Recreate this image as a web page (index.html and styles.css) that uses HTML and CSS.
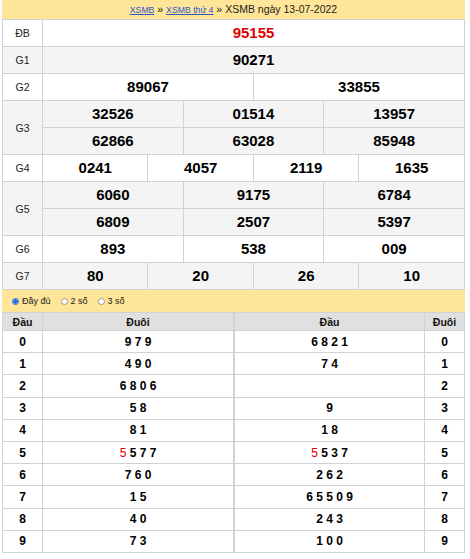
FILE: index.html
```html
<!DOCTYPE html>
<html lang="vi">
<head>
<meta charset="utf-8">
<link rel="stylesheet" href="styles.css">
</head>
<body>
<div class="wrap">
  <div class="bar">
    <a href="#">XSMB</a> » <a href="#">XSMB thứ 4</a> » XSMB ngày 13-07-2022
  </div>
  <table class="kq">
    <colgroup><col class="c-lbl"><col span="12"></colgroup>
    <tr><td class="l">ĐB</td><td colspan="12" class="red">95155</td></tr>
    <tr class="alt"><td class="l">G1</td><td colspan="12">90271</td></tr>
    <tr><td class="l">G2</td><td colspan="6">89067</td><td colspan="6">33855</td></tr>
    <tr class="alt"><td class="l" rowspan="2">G3</td><td colspan="4">32526</td><td colspan="4">01514</td><td colspan="4">13957</td></tr>
    <tr class="alt"><td colspan="4">62866</td><td colspan="4">63028</td><td colspan="4">85948</td></tr>
    <tr><td class="l">G4</td><td colspan="3">0241</td><td colspan="3">4057</td><td colspan="3">2119</td><td colspan="3">1635</td></tr>
    <tr class="alt"><td class="l" rowspan="2">G5</td><td colspan="4">6060</td><td colspan="4">9175</td><td colspan="4">6784</td></tr>
    <tr class="alt"><td colspan="4">6809</td><td colspan="4">2507</td><td colspan="4">5397</td></tr>
    <tr><td class="l">G6</td><td colspan="4">893</td><td colspan="4">538</td><td colspan="4">009</td></tr>
    <tr class="alt"><td class="l">G7</td><td colspan="3">80</td><td colspan="3">20</td><td colspan="3">26</td><td colspan="3">10</td></tr>
  </table>
  <div class="opt">
    <label class="radio"><span class="dot on"></span>Đầy đủ</label>
    <label class="radio"><span class="dot"></span>2 số</label>
    <label class="radio"><span class="dot"></span>3 số</label>
  </div>
  <div class="loto">
    <table class="lt left">
      <colgroup><col class="c-head"><col></colgroup>
      <tr class="hd"><th>Đầu</th><th>Đuôi</th></tr>
      <tr><td>0</td><td>9 7 9</td></tr>
      <tr><td>1</td><td>4 9 0</td></tr>
      <tr><td>2</td><td>6 8 0 6</td></tr>
      <tr><td>3</td><td>5 8</td></tr>
      <tr><td>4</td><td>8 1</td></tr>
      <tr><td>5</td><td><span class="r">5</span> 5 7 7</td></tr>
      <tr><td>6</td><td>7 6 0</td></tr>
      <tr><td>7</td><td>1 5</td></tr>
      <tr><td>8</td><td>4 0</td></tr>
      <tr><td>9</td><td>7 3</td></tr>
    </table>
    <table class="lt right">
      <colgroup><col><col class="c-tail"></colgroup>
      <tr class="hd"><th>Đầu</th><th>Đuôi</th></tr>
      <tr><td>6 8 2 1</td><td>0</td></tr>
      <tr><td>7 4</td><td>1</td></tr>
      <tr><td></td><td>2</td></tr>
      <tr><td>9</td><td>3</td></tr>
      <tr><td>1 8</td><td>4</td></tr>
      <tr><td><span class="r">5</span> 5 3 7</td><td>5</td></tr>
      <tr><td>2 6 2</td><td>6</td></tr>
      <tr><td>6 5 5 0 9</td><td>7</td></tr>
      <tr><td>2 4 3</td><td>8</td></tr>
      <tr><td>1 0 0</td><td>9</td></tr>
    </table>
  </div>
</div>
</body>
</html>
```
FILE: styles.css
```css
html, body {
  margin: 0;
  padding: 0;
  background: #fff;
}
body {
  font-family: "Liberation Sans", Arial, sans-serif;
  color: #000;
}
.wrap {
  margin-left: 2px;
  width: 463px;
}
.bar {
  height: 19px;
  background: #ffe597;
  font-size: 10.5px;
  line-height: 19px;
  text-align: center;
  color: #222;
}
.bar a {
  color: #2b55c9;
  font-size: 8.7px;
  text-decoration: underline;
}
.kq {
  width: 463px;
  border-collapse: collapse;
  table-layout: fixed;
}
.kq .c-lbl {
  width: 40px;
}
.kq td {
  border: 1px solid #d2d2d2;
  height: 26px;
  padding: 0;
  text-align: center;
  font-size: 15px;
  font-weight: bold;
  line-height: 16px;
}
.kq td.l {
  font-size: 10.5px;
  font-weight: normal;
  color: #222;
}
.kq td.red {
  color: #e00000;
}
.kq tr.alt td {
  background: #f4f4f4;
}
.opt {
  height: 22px;
  background: #ffe597;
  display: flex;
  align-items: center;
  padding-left: 10px;
  gap: 10px;
  font-size: 9px;
  color: #222;
}
.radio {
  display: flex;
  align-items: center;
  gap: 3px;
}
.dot {
  width: 7px;
  height: 7px;
  border-radius: 50%;
  border: 1px solid #9a9a9a;
  background: #fff;
  box-sizing: border-box;
}
.dot.on {
  border: 1px solid #1f6fe0;
  background: radial-gradient(circle, #1f6fe0 0 2px, #fff 2.5px);
}
.loto {
  display: flex;
}
.lt {
  border-collapse: collapse;
  table-layout: fixed;
}
.lt.left {
  width: 232px;
}
.lt.right {
  width: 231px;
}
.lt .c-head {
  width: 40px;
}
.lt .c-tail {
  width: 40px;
}
.lt th, .lt td {
  border: 1px solid #d2d2d2;
  padding: 0;
  text-align: center;
  font-size: 12px;
  font-weight: bold;
}
.lt th {
  background: #e0e0e0;
  font-size: 10.5px;
  height: 17px;
  color: #111;
}
.lt td {
  height: 21.2px;
  background: #fff;
}
.lt .r {
  color: #e00000;
  font-weight: normal;
}
```
